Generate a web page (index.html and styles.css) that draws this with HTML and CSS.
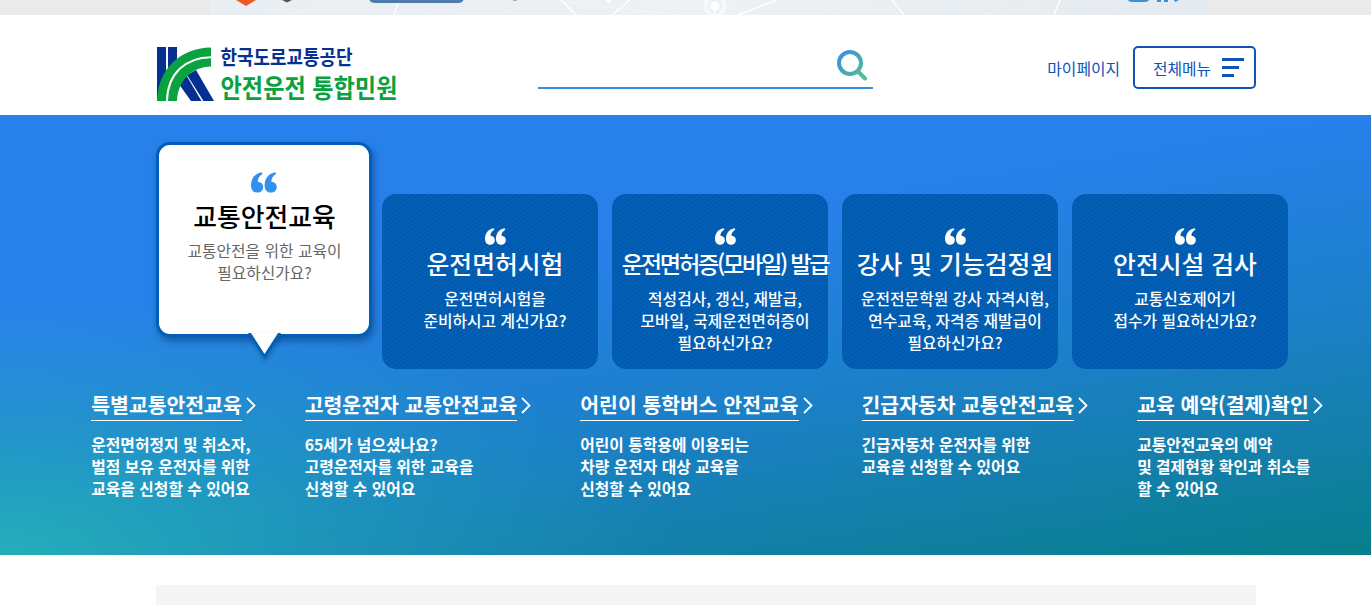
FILE: index.html
```
<!DOCTYPE html>
<html lang="ko">
<head>
    <meta charset="UTF-8">
    <meta name="viewport" content="width=device-width, initial-scale=1.0">
    <title>안전운전 통합민원</title>
    <link rel="stylesheet" href="styles.css">
</head>
<body>
    <svg class="defs" width="0" height="0">
        <symbol id="quote" viewBox="0 0 26 21">
            <path d="M10.800 0.2 C4 1.400 0 6.500 0 13.200 C0 18 2.500 20.600 6.200 20.600 C9.800 20.600 12.200 18.200 12.200 15 C12.200 11.800 10 10 6.800 9.700 C6.600 6.600 8.200 4.200 11.600 1.800 Z"/>
            <path d="M24.400 0.2 C17.600 1.400 13.600 6.500 13.600 13.200 C13.600 18 16.100 20.600 19.800 20.600 C23.400 20.600 25.800 18.200 25.800 15 C25.800 11.800 23.600 10 20.400 9.700 C20.200 6.600 21.800 4.200 25.200 1.800 Z"/>
        </symbol>
        <symbol id="arrow" viewBox="0 0 10 17">
            <path d="M1 1 L8.500 8.500 L1 16" fill="none" stroke="#fff" stroke-width="1.8"/>
        </symbol>
    </svg>

    <div class="top-banner">
        <svg width="995" height="15" viewBox="210 0 995 15">
            <defs>
                <linearGradient id="bannerBg">
                    <stop offset="0" stop-color="#e9eef2"/>
                    <stop offset="0.5" stop-color="#edf1f4"/>
                    <stop offset="1" stop-color="#e4eaef"/>
                </linearGradient>
            </defs>
            <rect x="210" width="995" height="15" fill="url(#bannerBg)"/>
            <g stroke="#fff" fill="none">
                <path d="M399 0 L394 15 M561 0 L576 15 M630 0 L612 15 M779 -1 L738 15 M892 0 L904 15 M1060 0 L1054 15" stroke-width="1.4"/>
                <path d="M290 15 L340 0 M470 0 L520 15 M540 0 L680 15 M650 15 L700 0 M800 0 L840 15 M850 15 L870 0 M960 0 L990 15 M1005 15 L1040 0 M1100 0 L1130 15" stroke-width="0.6" opacity="0.5"/>
            </g>
            <circle cx="715" cy="6" r="9.500" fill="none" stroke="#fff" stroke-width="4" opacity="0.5"/>
            <circle cx="715" cy="6" r="4.500" fill="#fff"/>
            <path d="M714.500 6 V15" stroke="#fff"/>
            <circle cx="609" cy="0" r="2.500" fill="#fff"/>
            <path d="M236 0 H256 L246 6 Z" fill="#ee5a24"/>
            <path d="M282 0 H292 L287 2.500 Z" fill="#555"/>
            <path d="M369 -8 H464 V-3 Q464 3 458 3 H375 Q369 3 369 -3 Z" fill="#4f7cab"/>
            <path d="M513 0 h4 v1 h-4 Z" fill="#aaa"/>
            <path d="M1127 -4 H1150 Q1150 2 1145 2 H1132 Q1127 2 1127 -4 M1157 0 h4 v2 h-4 Z M1164 0 h4 v2 h-4 Z M1174 0 h5 l-4 2 Z" fill="#3f90d3"/>
        </svg>
    </div>

    <header class="header">
        <a class="logo" href="#">
            <svg width="244" height="58" viewBox="0 0 244 58">
                <path d="M0 1 H9 V55 H0 Z M11 1 H20 V55 H11 Z" fill="#062f92"/>
                <path d="M19 34 L28 27 L44.500 55 H34 Z M30 29 L39 24 L57 55 H46.500 Z" fill="#062f92"/>
                <path d="M0 55 C1 24 22 2 54 1.500 V20.500 C34 21 21 35 20 55 Z" fill="#0aa23e"/>
                <path d="M10 55 C10.500 28 28 11.500 54 11.200" fill="none" stroke="#fff" stroke-width="2"/>
                <text class="logo-org" x="63.500" y="18.500" textLength="132" lengthAdjust="spacingAndGlyphs">한국도로교통공단</text>
                <text class="logo-name" x="63.500" y="52" textLength="177" lengthAdjust="spacingAndGlyphs">안전운전 통합민원</text>
            </svg>
        </a>
        <div class="search">
            <svg width="32" height="32" viewBox="0 0 32 32">
                <defs>
                    <linearGradient id="searchColor" x1="0" y1="0" x2="32" y2="32" gradientUnits="userSpaceOnUse">
                        <stop offset="0.15" stop-color="#3a94da"/>
                        <stop offset="0.9" stop-color="#56c08b"/>
                    </linearGradient>
                </defs>
                <g fill="none" stroke="url(#searchColor)" stroke-width="4">
                    <circle cx="14" cy="14" r="11"/>
                    <path d="M22 22.500 L29 29.500" stroke-linecap="round"/>
                </g>
            </svg>
        </div>
        <nav class="user-menu">
            <a class="mypage" href="#">마이페이지</a>
            <a class="all-menu" href="#"><span>전체메뉴</span>
                <svg width="22" height="19" viewBox="0 0 22 19">
                    <path d="M0 0 H22 V3 H0 Z M0 8 H17 V11 H0 Z M0 16 H12 V19 H0 Z" fill="#0f53b5"/>
                </svg>
            </a>
        </nav>
    </header>

    <main>
        <section class="hero">
            <div class="cards">
                <div class="card active">
                    <svg class="quote" width="26" height="21"><use href="#quote"/></svg>
                    <h2>교통안전교육</h2>
                    <p>교통안전을 위한 교육이<br>필요하신가요?</p>
                    <svg class="tail" width="36" height="30" viewBox="0 0 36 30">
                        <path d="M1 0 L17.500 26 L34 0 Z" fill="#005fb8"/>
                        <path d="M4 0 L17.500 21 L31 0 Z" fill="#fff"/>
                    </svg>
                </div>
                <div class="card">
                    <svg class="quote" width="21" height="17"><use href="#quote"/></svg>
                    <h2>운전면허시험</h2>
                    <p>운전면허시험을<br>준비하시고 계신가요?</p>
                </div>
                <div class="card">
                    <svg class="quote" width="21" height="17"><use href="#quote"/></svg>
                    <h2 class="tight">운전면허증(모바일) 발급</h2>
                    <p>적성검사, 갱신, 재발급,<br>모바일, 국제운전면허증이<br>필요하신가요?</p>
                </div>
                <div class="card">
                    <svg class="quote" width="21" height="17"><use href="#quote"/></svg>
                    <h2>강사 및 기능검정원</h2>
                    <p>운전전문학원 강사 자격시험,<br>연수교육, 자격증 재발급이<br>필요하신가요?</p>
                </div>
                <div class="card">
                    <svg class="quote" width="21" height="17"><use href="#quote"/></svg>
                    <h2>안전시설 검사</h2>
                    <p>교통신호제어기<br>접수가 필요하신가요?</p>
                </div>
            </div>

            <ul class="services">
                <li>
                    <a href="#"><span>특별교통안전교육</span><svg width="10" height="17"><use href="#arrow"/></svg></a>
                    <p>운전면허정지 및 취소자,<br>벌점 보유 운전자를 위한<br>교육을 신청할 수 있어요</p>
                </li>
                <li>
                    <a href="#"><span>고령운전자 교통안전교육</span><svg width="10" height="17"><use href="#arrow"/></svg></a>
                    <p>65세가 넘으셨나요?<br>고령운전자를 위한 교육을<br>신청할 수 있어요</p>
                </li>
                <li>
                    <a href="#"><span>어린이 통학버스 안전교육</span><svg width="10" height="17"><use href="#arrow"/></svg></a>
                    <p>어린이 통학용에 이용되는<br>차량 운전자 대상 교육을<br>신청할 수 있어요</p>
                </li>
                <li>
                    <a href="#"><span>긴급자동차 교통안전교육</span><svg width="10" height="17"><use href="#arrow"/></svg></a>
                    <p>긴급자동차 운전자를 위한<br>교육을 신청할 수 있어요</p>
                </li>
                <li>
                    <a href="#"><span>교육 예약(결제)확인</span><svg width="10" height="17"><use href="#arrow"/></svg></a>
                    <p>교통안전교육의 예약<br>및 결제현황 확인과 취소를<br>할 수 있어요</p>
                </li>
            </ul>
        </section>
        <div class="notice"></div>
    </main>
</body>
</html>
```
FILE: styles.css
```
* {
    box-sizing: border-box;
}
body {
    margin: 0;
    height: 605px;
    overflow: hidden;
    background: #fff;
    font-family: "Noto Sans CJK KR", sans-serif;
    font-size: 15.8px;
    line-height: 22px;
}
h2, p, ul {
    margin: 0;
    padding: 0;
}
ul {
    list-style: none;
}
a {
    color: inherit;
    text-decoration: none;
}
svg {
    display: block;
    flex: none;
}
.defs {
    position: absolute;
}
.top-banner {
    height: 15px;
    padding-left: 210px;
    background: #eaeaea;
}

/* header */
.header {
    display: flex;
    align-items: flex-start;
    height: 100px;
    padding: 31px 115px 0 157px;
}
.logo {
    width: 381px;
}
.logo svg {
    overflow: visible;
}
.logo-org {
    font-size: 20px;
    font-weight: 700;
    fill: #062f92;
}
.logo-name {
    font-size: 26px;
    font-weight: 700;
    fill: #0aa23e;
}
.search {
    display: flex;
    justify-content: flex-end;
    width: 335px;
    height: 43px;
    padding: 3px 5px 0 0;
    border-bottom: 2px solid #368fe0;
}
.user-menu {
    display: flex;
    align-items: center;
    gap: 13px;
    margin-left: auto;
    color: #0f53b5;
}
.mypage,
.all-menu span {
    padding-top: 2px;
}
.all-menu {
    display: flex;
    align-items: center;
    justify-content: space-between;
    width: 123px;
    height: 43px;
    padding: 0 10px 0 18px;
    border: 2px solid #0f53b5;
    border-radius: 5px;
}

/* hero */
.hero {
    height: 440px;
    padding-top: 27px;
    color: #fff;
    background:
        radial-gradient(ellipse 680px 260px at 0 100%, rgba(38, 182, 184, 0.85), rgba(38, 182, 184, 0.35) 50%, rgba(38, 182, 184, 0)),
        linear-gradient(171deg, #2880eb 0%, #2880eb 33%, #1c80cc 60%, #137fa8 83%, #0b7f98 93%, #077f8c 100%);
}
.cards {
    display: flex;
    align-items: flex-end;
    gap: 14px;
    height: 227px;
    margin-left: 156px;
}
.card {
    display: flex;
    flex-direction: column;
    align-items: center;
    width: 216px;
    height: 175px;
    padding-top: 34px;
    border-radius: 14px;
    text-align: center;
    white-space: nowrap;
    font-weight: 500;
    background: repeating-linear-gradient(145deg, #005bb0 0, #005bb0 1.5px, #0864b9 2.5px, #005bb0 3.5px);
}
.card .quote {
    margin-left: 10px;
    fill: #fff;
}
.card h2 {
    margin: 1px 0 7px 10px;
    font-size: 24.8px;
    font-weight: 500;
    line-height: 35px;
}
.card h2.tight {
    font-size: 23.2px;
    letter-spacing: -2.3px;
}
.card p {
    margin-left: 10px;
}
.card.active {
    position: relative;
    align-self: flex-start;
    height: 195px;
    margin-right: -4px;
    padding-top: 27px;
    border: 3px solid #005fb8;
    background: #fff;
    color: #666;
    font-weight: 400;
    box-shadow: 2px 4px 7px rgba(0, 40, 90, 0.45);
}
.card.active .quote {
    margin-left: 0;
    fill: #3490ec;
}
.card.active h2 {
    margin: 5px 0 7px 1px;
    color: #000;
    font-size: 25.8px;
}
.card.active p {
    margin-left: 1px;
}
.tail {
    position: absolute;
    top: 188px;
    left: 88px;
    overflow: visible;
    filter: drop-shadow(1px 3px 2px rgba(0, 40, 90, 0.35));
}

/* services */
.services {
    display: flex;
    gap: 49px;
    margin: 21px 0 0 91.3px;
    white-space: nowrap;
    font-weight: 700;
}
.services a {
    display: flex;
    align-items: flex-start;
    gap: 4px;
    height: 31px;
    font-size: 20.45px;
    line-height: 29px;
}
.services a span {
    height: 31px;
    padding-bottom: 1px;
    border-bottom: 1px solid #fff;
}
.services a svg {
    margin-top: 7px;
}
.services p {
    margin-top: 13px;
}
.notice {
    width: 1100px;
    height: 20px;
    margin: 30px 0 0 156px;
    background: #f5f5f5;
}
```
